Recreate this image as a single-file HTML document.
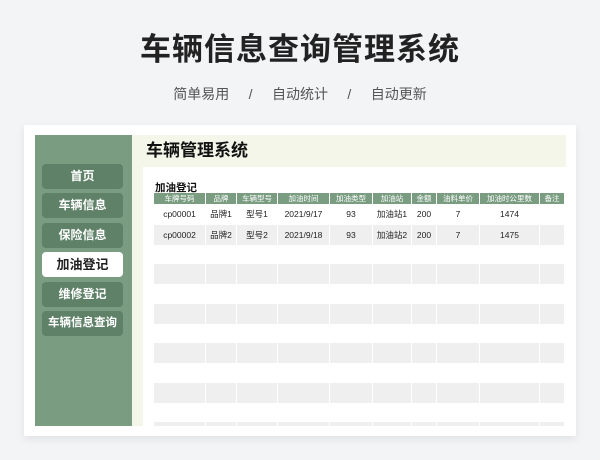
<!DOCTYPE html>
<html><head><meta charset="utf-8"><style>
*{margin:0;padding:0;box-sizing:border-box}
body{width:600px;height:460px;background:#f3f4f6;font-family:"Liberation Sans","Noto Sans CJK SC",sans-serif;position:relative;overflow:hidden}
.t{position:absolute;top:24px;width:600px;text-align:center;font-size:31px;font-weight:bold;color:#222;letter-spacing:1px}
.s{position:absolute;top:84px;width:600px;text-align:center;font-size:14px;color:#555;word-spacing:0}
.card{position:absolute;left:24px;top:125px;width:552px;height:311px;background:#fff;box-shadow:0 3px 8px rgba(0,0,0,.08)}
.side{position:absolute;left:35px;top:135px;width:97px;height:291px;background:#7a9d82}
.btn{position:absolute;left:42px;width:81px;height:25px;background:#5e8167;border-radius:4px;color:#fff;font-weight:bold;font-size:12px;text-align:center;line-height:25px}
.btn.a{background:#fff;color:#222;font-size:13px}
.hd{position:absolute;left:132px;top:135px;width:434px;height:32px;background:#f5f6ea;font-size:17px;font-weight:bold;color:#111;padding-left:14px;line-height:32px}
.strip{position:absolute;left:132px;top:167px;width:11px;height:259px;background:#f5f6ea}
.cap{position:absolute;left:155px;top:180px;font-size:10.5px;font-weight:bold;color:#111}
.row{position:absolute;left:154px;height:20px;display:flex;font-size:8.5px;color:#222}
.row div{height:100%;text-align:center;line-height:20px;border-right:1.5px solid #fff}
.h{height:11px;top:193px}.h div{background:#7a9d82;color:#fff;line-height:11px;font-size:7.5px}
.g div{background:#efefef}
</style></head><body>
<div class="t">车辆信息查询管理系统</div>
<div class="s">简单易用 &nbsp;&nbsp;&nbsp; / &nbsp;&nbsp;&nbsp; 自动统计 &nbsp;&nbsp;&nbsp; / &nbsp;&nbsp;&nbsp; 自动更新</div>
<div class="card"></div>
<div class="side"></div>
<div class="btn" style="top:164px">首页</div>
<div class="btn" style="top:193px">车辆信息</div>
<div class="btn" style="top:223px">保险信息</div>
<div class="btn a" style="top:252px">加油登记</div>
<div class="btn" style="top:282px">维修登记</div>
<div class="btn" style="top:311px;font-size:11.5px">车辆信息查询</div>
<div class="hd">车辆管理系统</div>
<div class="strip"></div>
<div class="cap">加油登记</div>
<div class="row h"><div style="width:52px">车牌号码</div><div style="width:31px">品牌</div><div style="width:41px">车辆型号</div><div style="width:52px">加油时间</div><div style="width:43px">加油类型</div><div style="width:39px">加油站</div><div style="width:25px">金额</div><div style="width:43px">油料单价</div><div style="width:60px">加油时公里数</div><div style="width:25px">备注</div></div>
<div class="row" style="top:204px"><div style="width:52px">cp00001</div><div style="width:31px">品牌1</div><div style="width:41px">型号1</div><div style="width:52px">2021/9/17</div><div style="width:43px">93</div><div style="width:39px">加油站1</div><div style="width:25px">200</div><div style="width:43px">7</div><div style="width:60px">1474</div><div style="width:25px"></div></div>
<div class="row g" style="top:225px"><div style="width:52px">cp00002</div><div style="width:31px">品牌2</div><div style="width:41px">型号2</div><div style="width:52px">2021/9/18</div><div style="width:43px">93</div><div style="width:39px">加油站2</div><div style="width:25px">200</div><div style="width:43px">7</div><div style="width:60px">1475</div><div style="width:25px"></div></div>
<div class="row g" style="top:264px"><div style="width:52px"></div><div style="width:31px"></div><div style="width:41px"></div><div style="width:52px"></div><div style="width:43px"></div><div style="width:39px"></div><div style="width:25px"></div><div style="width:43px"></div><div style="width:60px"></div><div style="width:25px"></div></div>
<div class="row g" style="top:304px"><div style="width:52px"></div><div style="width:31px"></div><div style="width:41px"></div><div style="width:52px"></div><div style="width:43px"></div><div style="width:39px"></div><div style="width:25px"></div><div style="width:43px"></div><div style="width:60px"></div><div style="width:25px"></div></div>
<div class="row g" style="top:343px"><div style="width:52px"></div><div style="width:31px"></div><div style="width:41px"></div><div style="width:52px"></div><div style="width:43px"></div><div style="width:39px"></div><div style="width:25px"></div><div style="width:43px"></div><div style="width:60px"></div><div style="width:25px"></div></div>
<div class="row g" style="top:383px"><div style="width:52px"></div><div style="width:31px"></div><div style="width:41px"></div><div style="width:52px"></div><div style="width:43px"></div><div style="width:39px"></div><div style="width:25px"></div><div style="width:43px"></div><div style="width:60px"></div><div style="width:25px"></div></div>
<div class="row g" style="top:422px;height:4px"><div style="width:52px"></div><div style="width:31px"></div><div style="width:41px"></div><div style="width:52px"></div><div style="width:43px"></div><div style="width:39px"></div><div style="width:25px"></div><div style="width:43px"></div><div style="width:60px"></div><div style="width:25px"></div></div>
</body></html>
